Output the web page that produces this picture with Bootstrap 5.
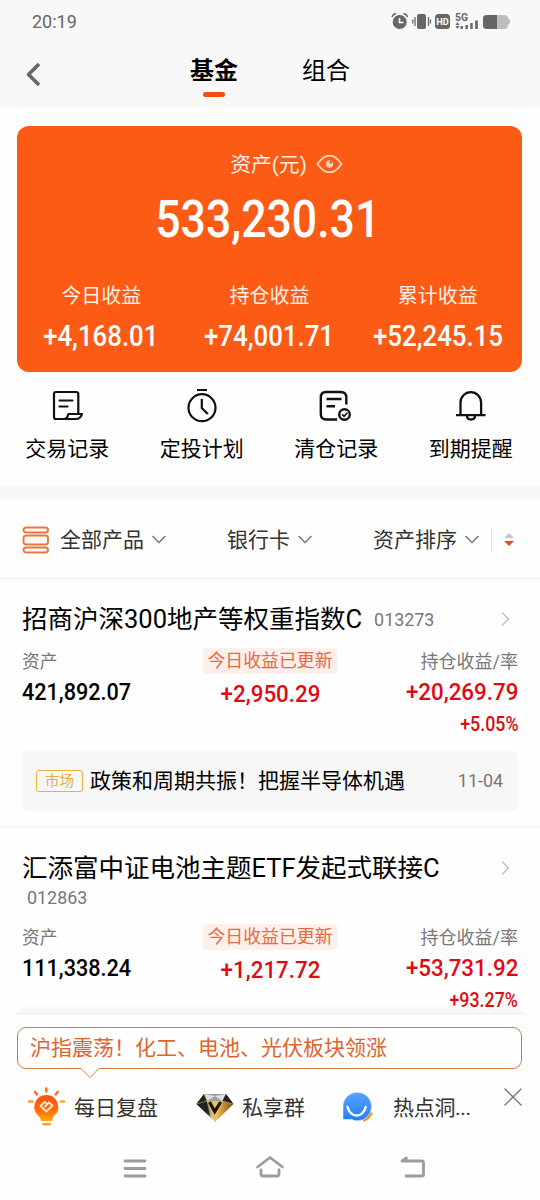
<!DOCTYPE html>
<html lang="zh-CN">
<head>
<meta charset="utf-8">
<meta name="viewport" content="width=device-width, initial-scale=1">
<title>基金</title>
<link href="https://cdn.jsdelivr.net/npm/bootstrap@5.3.0/dist/css/bootstrap.min.css" rel="stylesheet">
<style>
body{font-family:Roboto,"Noto Sans CJK SC",sans-serif;color:#000;background:#fefefe;width:540px;height:1200px;overflow:hidden;line-height:1}
svg{display:block;flex:none}
.scroll-area{height:1015px;overflow:hidden}
.top-area{height:108px;background:#f8f8f8}
.status-bar{height:42px;padding:0 29px 0 32px;color:#666;font-size:18px}
.tab-bar{height:66px;font-size:24px}
.tab-bar .tab{width:48px;line-height:58px;height:66px}
.tab .mark-line{width:22px;height:5px;border-radius:3px;background:#f24c11;margin:-8px auto 0}
.asset-card{margin:18px 18px 0 17px;height:246px;border-radius:12px;background:#fb5b14;color:#fff}
.asset-title{height:30px;margin-top:23px;font-size:20.8px;color:#fff0e5;gap:9px;padding-left:34px}
.num{display:inline-block;font-weight:500;white-space:nowrap;transform:scaleX(.92)}
.num-l{transform-origin:left}.num-r{transform-origin:right}
.total{font-size:51px;line-height:60px;height:60px;margin-top:11px;padding-right:4px}
.total .num{transform:scaleX(.874)}
.stat{width:168.3px}
.stat-label{font-size:20px;line-height:30px;color:#fff0e5}
.stat-value{font-size:29px;line-height:40px;margin-top:5px}
.stat-value .num{transform:scaleX(.89)}
.shortcuts{height:114px;padding-top:16px}
.shortcuts .item{width:134.5px;font-size:21px}
.shortcuts .item span{line-height:30px;margin-top:10px}
.gap-band{height:15px;background:#f8f8f8}
.filters{height:78px;border-bottom:1px solid #efefef;font-size:21px;color:#333;padding:0 0 0 22px;white-space:nowrap}
.filters span{padding-top:2px}
.fund{padding:0 22px}
.fund-name{font-size:25.5px;line-height:36px;white-space:nowrap}
.code{font-size:17.9px;color:#777}
.cap{font-size:17.7px;line-height:28px;height:26px;color:#777}
.cap-r{font-size:18px}
.val{font-size:23.5px;line-height:30px;margin-top:3px}
.val-mid{margin-top:5px}
.pct{font-size:20px;line-height:26px;margin-top:4px}
.pct .num{transform:scaleX(.89)}
.red-num{color:#df0a12}
.val.red-num .num{transform:scaleX(.95)}
.updated{background:#ffefea;color:#e36c40;border-radius:3px;width:134px;height:26px;line-height:26px;font-size:17.9px}
.news{height:60px;background:#f7f7f7;border-radius:6px;padding:0 15px 0 14px;font-size:21px}
.news-tag{width:47px;height:22px;border:1px solid #ecb040;border-radius:3px;color:#e7ad3d;font-size:14.5px;line-height:21px;margin-right:7px}
.sheet-shadow{left:14px;right:14px;top:-11px;height:11px;background:linear-gradient(#0000,#0000000a);clip-path:polygon(20px 0,calc(100% - 20px) 0,calc(100% - 8px) 3px,100% 100%,0 100%,8px 3px)}
.dock{height:185px;background:#fefefe}
.tip{margin:12px 18px 0 17px;height:42px;border:1px solid #d9783f;border-radius:9px;font-size:21px;line-height:40px;color:#e0642e;padding-left:12px}
.tip svg{left:62px;top:39px}
.links{height:67px;font-size:21px;color:#333;padding-left:27px;white-space:nowrap}
.links span{padding-top:2px}
.sysnav{height:50px;margin-top:6px}
</style>
</head>
<body>
<main class="scroll-area">
  <header class="top-area">
    <div class="status-bar d-flex align-items-center justify-content-between">
      <span style="padding-top:2px">20:19</span>
      <svg width="120" height="20" viewBox="391 11 120 20" fill="#666">
        <circle cx="399.700" cy="22" r="7"/><path d="M392 17q1-3 4-3.500M403.500 13.500q3 .5 4 3.500" fill="none" stroke="#666" stroke-width="1.500"/><path d="M399.500 18v4.500h4" fill="none" stroke="#fff" stroke-width="1.600"/>
        <rect x="417" y="14" width="9" height="15" rx="2"/><path d="M415 17v9M428.500 17v9M412.800 19.500v4M430.500 19.500v4" stroke="#666" stroke-width="1.300"/>
        <rect x="435" y="14" width="15" height="15" rx="3.500"/><text x="436.300" y="25" font-size="9.500" font-weight="700" fill="#fff" textLength="12.500" lengthAdjust="spacingAndGlyphs">HD</text>
        <text x="455" y="21" font-size="10" font-weight="700" textLength="13" lengthAdjust="spacingAndGlyphs">5G</text>
        <path d="M455.500 25l2-3 2 3zM455.500 26l2 3 2-3zM460.500 26h2.400v3h-2.400zM465.500 25h2.400v4h-2.400zM470.300 23h2.400v6h-2.400zM475.200 20.500h2.600v8.500h-2.600z"/>
        <path d="M497 15h7q4 0 4 3l2 2v3l-2 2q0 4-4 4h-7z" fill="#bdbdbd"/><path d="M497 15v14h-10q-4 0-4-3v-8q0-3 4-3z"/>
      </svg>
    </div>
    <div class="tab-bar d-flex">
      <svg width="190" height="66" viewBox="0 42 190 66"><path d="M39 64L28.500 74.500 39 85" fill="none" stroke="#666" stroke-width="3.600" stroke-linejoin="round"/></svg>
      <div class="tab text-center fw-bold">基金<div class="mark-line"></div></div>
      <div class="tab text-center" style="margin-left:64px">组合</div>
    </div>
  </header>

  <section class="asset-card d-flex flex-column">
    <div class="asset-title d-flex justify-content-center align-items-center">
      <span style="padding-top:2px">资产(元)</span>
      <svg width="27" height="20" viewBox="0 0 27 20" fill="none" stroke="#ffcdb5" stroke-width="2"><path d="M1.500 10Q5 5 8.500 2.800Q13.500.500 18.500 2.800Q22 5 25.500 10Q22 15 18.500 17.200Q13.500 19.500 8.500 17.200Q5 15 1.500 10z"/><circle cx="13.500" cy="10" r="3.700" fill="#ffcdb5" stroke="none"/><circle cx="15" cy="8" r="1.600" fill="#fb5b14" stroke="none"/></svg>
    </div>
    <div class="text-center total"><span class="num">533,230.31</span></div>
    <div class="d-flex text-center" style="margin-top:31px">
      <div class="stat"><div class="stat-label">今日收益</div><div class="stat-value"><span class="num">+4,168.01</span></div></div>
      <div class="stat"><div class="stat-label">持仓收益</div><div class="stat-value"><span class="num">+74,001.71</span></div></div>
      <div class="stat"><div class="stat-label">累计收益</div><div class="stat-value"><span class="num">+52,245.15</span></div></div>
    </div>
  </section>

  <nav class="shortcuts d-flex">
    <div class="item d-flex flex-column align-items-center">
      <svg width="36" height="36" viewBox="49 388 36 36" fill="none" stroke="#111" stroke-width="2.200" stroke-linejoin="round" stroke-linecap="round"><path d="M78.300 413v-19q0-2-2-2h-20.300q-2 0-2 2v23q0 2 2 2h20q4.500 0 6-5h-13.700q-1 5-4 5M59.500 400.500h13M59.500 406.500h8"/></svg><span>交易记录</span>
    </div>
    <div class="item d-flex flex-column align-items-center">
      <svg width="36" height="36" viewBox="183.500 388 36 36" fill="none" stroke="#111" stroke-width="2.200"><circle cx="201.500" cy="407.700" r="13.500"/><path d="M196.500 390h10M201.300 399v9l6 6"/></svg><span>定投计划</span>
    </div>
    <div class="item d-flex flex-column align-items-center">
      <svg width="36" height="36" viewBox="318.500 388 36 36" fill="none" stroke="#111" stroke-width="2.400"><path d="M346.800 404.500v-7q0-5.500-5.500-5.500h-15q-5 0-5 5.500v16.500q0 5.500 5.500 5.500h10.800M327 399h15M327 406.300h8.500"/><circle cx="345" cy="414.500" r="5.300"/><path d="M342.500 414.300l2 2 3.500-3.500" stroke-width="1.600"/></svg><span>清仓记录</span>
    </div>
    <div class="item d-flex flex-column align-items-center">
      <svg width="36" height="36" viewBox="453 388 36 36" fill="none" stroke="#111" stroke-width="2.300"><path d="M456 415.200h29.500M460.500 415v-12.500a10.300 10.300 0 0 1 20.600 0v12.500M467 416q0 3.500 4 3.500t4-3.500"/></svg><span>到期提醒</span>
    </div>
  </nav>
  <div class="gap-band"></div>

  <div class="filters d-flex align-items-center">
    <svg width="27" height="28" viewBox="0 0 27 28" fill="#fff7f1" stroke="#e67843" stroke-width="1.900"><rect x="1.500" y="1.500" width="24.500" height="5" rx="2.500"/><rect x="1.500" y="9.500" width="24.500" height="9" rx="2.500"/><rect x="1.500" y="21.500" width="24.500" height="5" rx="2.500"/></svg>
    <span style="margin-left:11px">全部产品</span>
    <svg width="14" height="9" viewBox="0 0 14 9" style="margin-left:8px" fill="none" stroke="#777" stroke-width="1.500"><path d="M.5 1l6.500 6.500L13.500 1"/></svg>
    <span style="margin-left:61px">银行卡</span>
    <svg width="14" height="9" viewBox="0 0 14 9" style="margin-left:8px" fill="none" stroke="#777" stroke-width="1.500"><path d="M.5 1l6.500 6.500L13.500 1"/></svg>
    <span style="margin-left:61px">资产排序</span>
    <svg width="14" height="9" viewBox="0 0 14 9" style="margin-left:8px" fill="none" stroke="#777" stroke-width="1.500"><path d="M.5 1l6.500 6.500L13.500 1"/></svg>
    <svg width="26" height="22" viewBox="0 0 26 22" style="margin-left:12px"><path d="M.5 0v22" stroke="#e5e5e5"/><path d="M13 9l5-5 5 5z" fill="#c6c6c6"/><path d="M13 12h10l-5 5z" fill="#f24c11"/></svg>
  </div>

  <article class="fund" style="padding-top:22px;height:248px;border-bottom:1px solid #f3f3f3">
    <div class="d-flex align-items-center fund-name"><span>招商沪深300地产等权重指数C</span><span class="code" style="margin-left:12px;line-height:34px;padding-top:2px">013273</span>
      <svg class="ms-auto me-2" width="9" height="14" viewBox="0 0 9 14" fill="none" stroke="#bbb" stroke-width="1.300"><path d="M1 .5L7.500 7 1 13.500"/></svg></div>
    <div class="d-flex justify-content-between" style="margin-top:11px">
      <div style="width:165px"><div class="cap">资产</div><div class="val"><span class="num num-l">421,892.07</span></div></div>
      <div class="text-center"><div class="updated">今日收益已更新</div><div class="val val-mid red-num"><span class="num">+2,950.29</span></div></div>
      <div class="text-end" style="width:165px"><div class="cap cap-r">持仓收益/率</div><div class="val red-num"><span class="num num-r">+20,269.79</span></div><div class="pct red-num"><span class="num num-r">+5.05%</span></div></div>
    </div>
    <div class="news d-flex align-items-center" style="margin-top:14px"><span class="news-tag text-center">市场</span><span>政策和周期共振！把握半导体机遇</span><span class="code ms-auto">11-04</span></div>
  </article>

  <article class="fund" style="padding-top:23px">
    <div class="d-flex align-items-center fund-name"><span>汇添富中证电池主题ETF发起式联接C</span>
      <svg class="ms-auto me-2" width="9" height="14" viewBox="0 0 9 14" fill="none" stroke="#bbb" stroke-width="1.300"><path d="M1 .5L7.500 7 1 13.500"/></svg></div>
    <div class="code" style="padding-left:5px;line-height:24px">012863</div>
    <div class="d-flex justify-content-between" style="margin-top:14px">
      <div style="width:165px"><div class="cap">资产</div><div class="val"><span class="num num-l">111,338.24</span></div></div>
      <div class="text-center"><div class="updated">今日收益已更新</div><div class="val val-mid red-num"><span class="num">+1,217.72</span></div></div>
      <div class="text-end" style="width:165px"><div class="cap cap-r">持仓收益/率</div><div class="val red-num"><span class="num num-r">+53,731.92</span></div><div class="pct red-num"><span class="num num-r">+93.27%</span></div></div>
    </div>
  </article>
</main>

<footer class="dock position-relative d-flex flex-column">
  <div class="sheet-shadow position-absolute"></div>
  <div class="tip position-relative">沪指震荡！化工、电池、光伏板块领涨
    <svg class="position-absolute" width="20" height="12" viewBox="0 0 20 12"><path d="M1 1.500L10 10.500 19 1.500V0H1z" fill="#fefefe"/><path d="M1 1.500L10 10.500 19 1.500" fill="none" stroke="#d9783f"/></svg>
  </div>
  <div class="links d-flex align-items-center" style="padding-top:9px">
    <svg width="38" height="42" viewBox="27 1087 38 42"><defs><linearGradient id="bulb" x2="0" y2="1"><stop stop-color="#fb5212"/><stop offset=".6" stop-color="#ff6b05"/><stop offset="1" stop-color="#ffb000"/></linearGradient></defs><path d="M46.300 1096a12 12 0 0 1 7.500 21.300q-1.500 1.200-1.500 4.700h-11.500q0-3.500-2-4.700A12 12 0 0 1 46.300 1096z" fill="url(#bulb)"/><path d="M46.300 1089.500v3M35 1093l2 2.300M57.700 1093l-2 2.300" stroke="#f27632" stroke-width="2.600" stroke-linecap="round"/><path d="M29 1102.500h3.500M61 1102.500h3M43.500 1125.300h6.500" stroke="#f5a137" stroke-width="2.400" stroke-linecap="round"/><path d="M46.500 1104.500l-2-1.500-4 4 5.800 5.500 6.200-6-3.500-3-4.500 4.500" fill="none" stroke="#ffe7d2" stroke-width="1.800" stroke-linejoin="round"/></svg>
    <span style="margin-left:9px">每日复盘</span>
    <svg width="40" height="32" viewBox="195 1092 40 32" style="margin-left:37px"><defs><linearGradient id="gem"><stop stop-color="#242424"/><stop offset=".25" stop-color="#454545"/><stop offset=".48" stop-color="#fff0bd"/><stop offset=".6" stop-color="#e9ad45"/><stop offset="1" stop-color="#755019"/></linearGradient></defs><path d="M204 1095h22l7.500 10L215 1123l-18.500-18z" fill="url(#gem)"/><path d="M204 1095h22l-4 7h-15z" fill="#a0a0a0"/><path d="M204 1095l11 2-8 5zM226 1095l-11 2 7 5z" fill="#dededb"/><path d="M226 1095l7.500 10-11-3zM204 1095l3 7-10.500 3zM196.500 1105l10-3 3.500 15z" fill="#242220"/><path d="M207 1102h16l-8 20z" fill="#f0bb57"/><path d="M204 1095l3 7-10.500 3M222 1102l11.500 3M207 1102l8 21 8-21" fill="none" stroke="#d4af6d" stroke-width=".6"/><path d="M209.500 1103l5.200 9.500 6-9.500" fill="none" stroke="#171510" stroke-width="3.200"/></svg>
    <span style="margin-left:7px">私享群</span>
    <svg width="34" height="34" viewBox="342 1091 34 34" style="margin-left:36px"><defs><linearGradient id="chat" x2="0" y2="1"><stop stop-color="#58a1ff"/><stop offset="1" stop-color="#237ff5"/></linearGradient></defs><path d="M364 1121.500q6-2 8.500-8" fill="none" stroke="#f39420" stroke-width="3"/><path d="M344 1120.500v-13a14.300 14.300 0 1 1 14 14.300q-3 0-5-1.300z" fill="url(#chat)" stroke="#fefefe" stroke-width=".5"/><path d="M348.500 1108q2.500 8.500 9.200 8.500t9-8.500" fill="none" stroke="#fff" stroke-width="2.400" stroke-linecap="round"/></svg>
    <span style="margin-left:18px;letter-spacing:-.3px">热点洞...</span>
    <svg width="18" height="18" viewBox="0 0 18 18" class="ms-auto" style="margin-right:18px;margin-top:-20px"><path d="M.5.5l17 17M17.500.5l-17 17" stroke="#777" stroke-width="1.300"/></svg>
  </div>
  <div class="sysnav d-flex align-items-center">
    <svg width="540" height="30" viewBox="0 1152 540 30" fill="none" stroke="#9c9c9c" stroke-width="2.800" stroke-linecap="round" stroke-linejoin="round"><path d="M125 1161h20M125 1168.500h20M125 1176h20"/><path d="M257.500 1167l12.500-9.500 12.500 9.500M261 1170v4q0 2 2 2h14q2 0 2-2v-4"/><path d="M406.500 1158l-4.500 3h20q1.500 0 1.500 1.500v12q0 1.500-1.500 1.500h-16"/></svg>
  </div>
</footer>
<script src="https://cdn.jsdelivr.net/npm/bootstrap@5.3.0/dist/js/bootstrap.bundle.min.js"></script>
</body>
</html>
